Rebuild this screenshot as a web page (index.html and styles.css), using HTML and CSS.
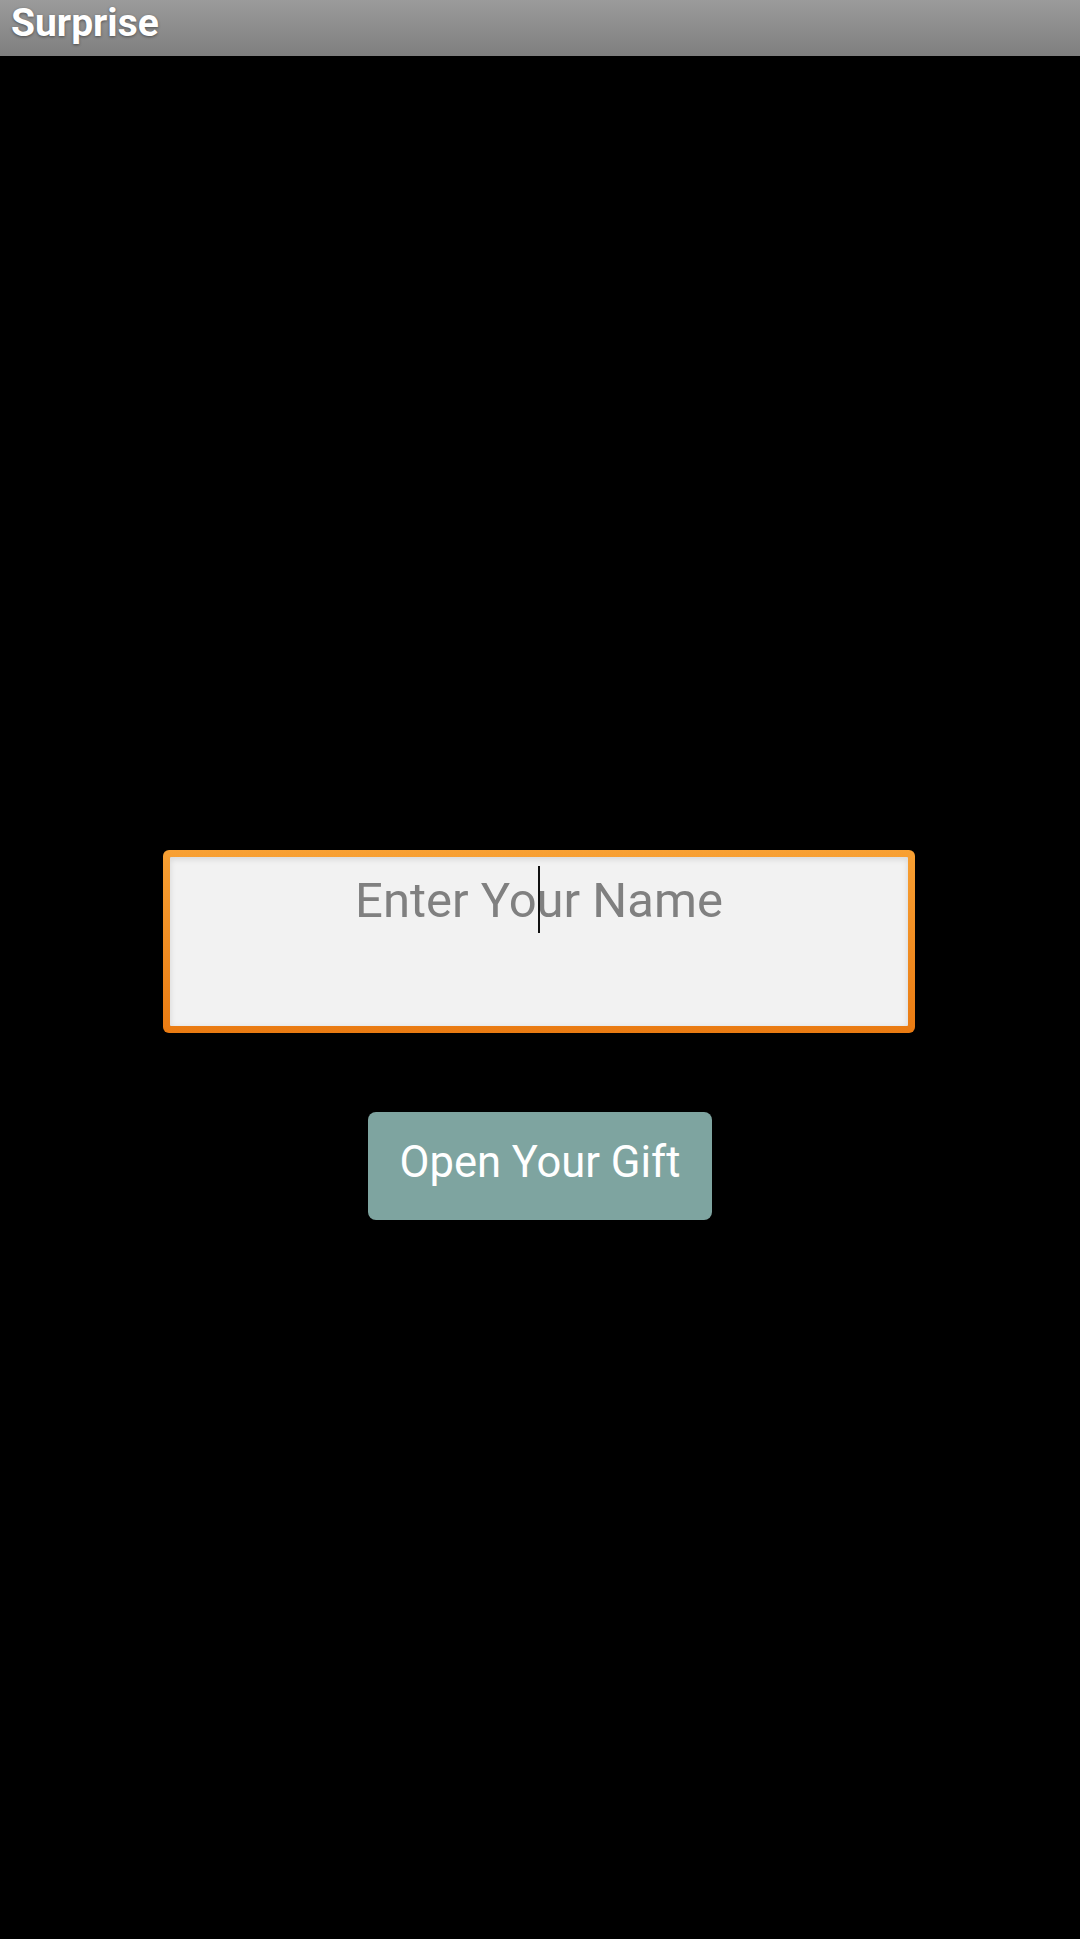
FILE: index.html
```html
<!DOCTYPE html>
<html>
<head>
<meta charset="utf-8">
<link rel="stylesheet" href="styles.css">
</head>
<body>
<div class="titlebar"><span class="title">Surprise</span></div>
<main class="content">
  <div class="field">
    <div class="field-inner">
      <span class="placeholder">Enter Your Name</span>
      <span class="caret"></span>
    </div>
  </div>
  <div class="button">Open Your Gift</div>
</main>
</body>
</html>
```
FILE: styles.css
```css
html, body {
  margin: 0;
  padding: 0;
  background: #000;
  height: 1939px;
  font-family: Roboto, "Noto Sans", sans-serif;
}
.titlebar {
  height: 56px;
  background: linear-gradient(#9b9b9b, #7f7f7f);
  display: flex;
  align-items: center;
  padding-left: 11px;
  box-sizing: border-box;
}
.title {
  color: #fff;
  font-weight: 700;
  font-size: 39px;
  line-height: 44px;
  margin-top: -10px;
  text-shadow: 0 1px 3px rgba(0,0,0,0.45);
}
.content {
  display: flex;
  flex-direction: column;
  align-items: center;
  padding-top: 794px;
}
.field {
  width: 752px;
  height: 183px;
  box-sizing: border-box;
  padding: 7px;
  border-radius: 6px;
  background: linear-gradient(#f8a033, #ea7b12);
  margin-left: -2px;
}
.field-inner {
  position: relative;
  height: 100%;
  background: #f2f2f2;
  box-shadow: inset 0 2px 6px rgba(0,0,0,0.12);
  border-radius: 1px;
  text-align: center;
  padding-top: 15px;
  box-sizing: border-box;
}
.placeholder {
  color: #808080;
  font-size: 49px;
  line-height: 58px;
}
.caret {
  position: absolute;
  left: 368px;
  top: 9px;
  width: 1.5px;
  height: 67px;
  background: #111;
}
.button {
  margin-top: 79px;
  width: 344px;
  height: 108px;
  background: #7ea4a0;
  border-radius: 8px;
  color: #fff;
  font-size: 43.5px;
  display: flex;
  align-items: center;
  justify-content: center;
  padding-bottom: 8px;
  box-sizing: border-box;
}
```
